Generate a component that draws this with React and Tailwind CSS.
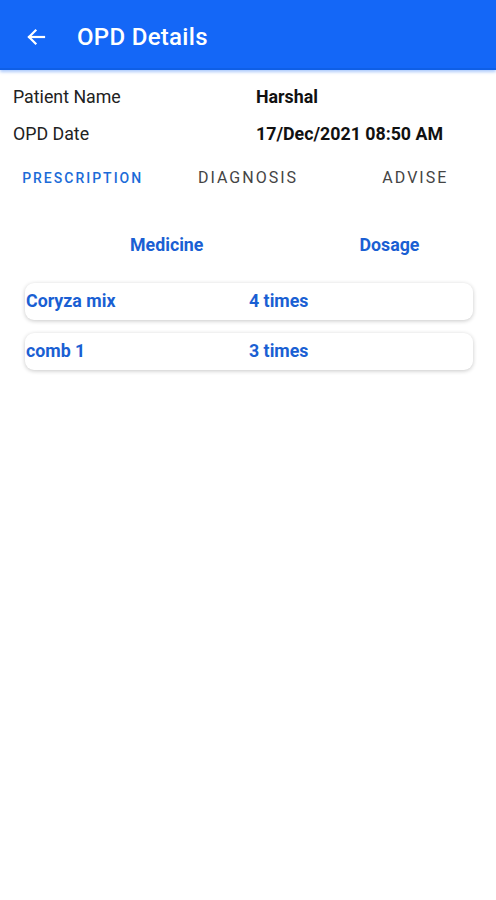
import React from 'react';

const rows = [
  { name: 'Coryza mix', dose: '4 times' },
  { name: 'comb 1', dose: '3 times' },
];

const App = () => {
  return (
    <div className="min-h-[900px] bg-white font-['Roboto',sans-serif]">
      <div className="h-[70px] bg-[#1467f7] border-b-2 border-[#0f5fe6] flex items-center pt-[6px] shadow-[0_2px_3px_rgba(20,103,247,0.35)]">
        <svg className="ml-[24px] w-[24px] h-[24px]" viewBox="0 0 24 24" fill="none" stroke="white" strokeWidth="2.2" strokeLinecap="square">
          <path d="M20 12H5" />
          <path d="M11.5 5.5L5 12l6.5 6.5" />
        </svg>
        <h1 className="ml-[29px] text-white text-[24px] font-medium tracking-[0.3px]">OPD Details</h1>
      </div>

      <div className="px-[13px] pt-[9px] text-[17.8px] text-[#222]">
        <div className="flex h-[37px] items-center">
          <span className="w-[243px]">Patient Name</span>
          <span className="font-bold text-[#111]">Harshal</span>
        </div>
        <div className="flex h-[37px] items-center">
          <span className="w-[243px]">OPD Date</span>
          <span className="font-bold text-[#111]">17/Dec/2021 08:50 AM</span>
        </div>
      </div>

      <div className="grid grid-cols-3 h-[48px] mt-[1px] items-center font-medium">
        <span className="text-center text-[14px] tracking-[2px] text-[#1b6bd8]">PRESCRIPTION</span>
        <span className="text-center text-[#444] text-[16px] tracking-[2px] font-normal">DIAGNOSIS</span>
        <span className="text-center text-[#444] text-[16px] tracking-[2px] font-normal pl-[4px]">ADVISE</span>
      </div>

      <div className="flex mt-[23px] h-[40px] items-center text-[17.8px] font-bold text-[#1a5fd3]">
        <span className="ml-[130px]">Medicine</span>
        <span className="ml-[156px]">Dosage</span>
      </div>

      <div className="pl-[25px] pr-[23px] mt-[18px] flex flex-col gap-[13px]">
        {rows.map((r) => (
          <div
            key={r.name}
            className="flex h-[37px] items-center rounded-[9px] bg-white shadow-[0_1px_4px_rgba(0,0,0,0.22)] text-[17.8px] font-bold text-[#1a5fd3]"
          >
            <span className="w-[224px] pl-[1px]">{r.name}</span>
            <span>{r.dose}</span>
          </div>
        ))}
      </div>
    </div>
  );
};

export default App;
